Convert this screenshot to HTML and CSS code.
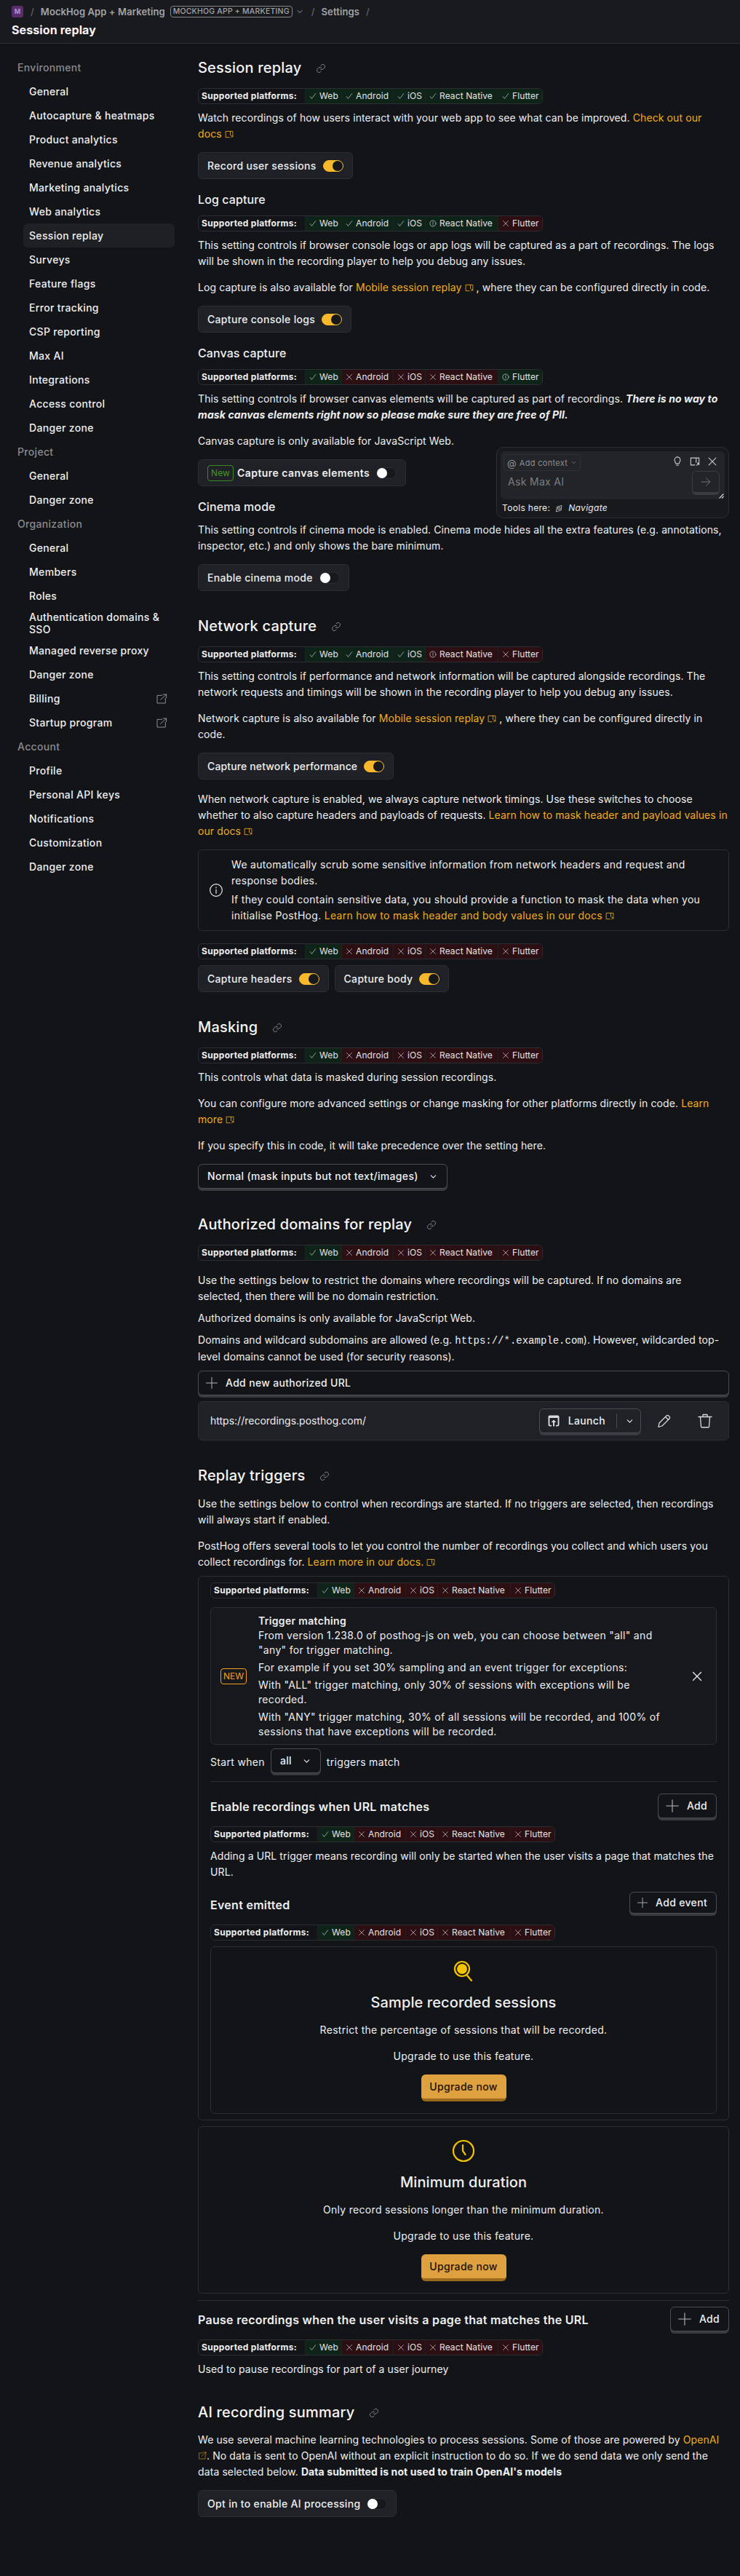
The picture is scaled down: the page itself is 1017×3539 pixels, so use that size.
FILE: index.html
```html
<!DOCTYPE html>
<html>
    <head>
        <meta charset="utf-8" />
        <title>Session replay</title>
        <link rel="stylesheet" href="styles.css">
    </head>

    <body>
        <svg class="sprite" xmlns="http://www.w3.org/2000/svg">
            <symbol id="i-link" viewBox="0 0 24 24"><path d="M10 13a5 5 0 0 0 7.5.5l3-3a5 5 0 0 0-7-7l-1.7 1.7M14 11a5 5 0 0 0-7.5-.5l-3 3a5 5 0 0 0 7 7l1.7-1.7"/></symbol>
            <symbol id="i-check" viewBox="0 0 16 16"><path d="M2 9l3.5 4.5L14 2.5"/></symbol>
            <symbol id="i-x" viewBox="0 0 16 16"><path d="M2.5 2.5l11 11M13.5 2.5l-11 11"/></symbol>
            <symbol id="i-warn" viewBox="0 0 16 16"><circle cx="8" cy="8" r="6.5"/><path d="M8 4.5v4.5M8 10.5v1"/></symbol>
            <symbol id="i-open" viewBox="0 0 16 14"><path d="M8 12.5H1.5v-11h13V8M10 1.5v7M11 13l3.5-3.5M12 9.5h2.5V12"/></symbol>
            <symbol id="i-external" viewBox="0 0 24 24"><path d="M13 5H3v16h17V11M10 14L22 3M15 3h7v7"/></symbol>
            <symbol id="i-chevron" viewBox="0 0 16 16"><path d="M4 6l4 4 4-4"/></symbol>
            <symbol id="i-plus" viewBox="0 0 24 24"><path d="M12 2v20M2 12h20"/></symbol>
            <symbol id="i-info" viewBox="0 0 24 24"><circle cx="12" cy="12" r="10"/><path d="M12 11v6M12 7v1.2"/></symbol>
        </svg>

        <header class="topbar">
            <div class="crumbs">
                <span class="logo">M</span>
                <span class="slash">/</span>
                <span class="crumb">MockHog App + Marketing</span>
                <span class="org-tag">MOCKHOG APP + MARKETING</span>
                <svg class="crumb-chevron ico"><use href="#i-chevron"/></svg>
                <span class="slash slash-wide">/</span>
                <span class="crumb">Settings</span>
                <span class="slash slash-wide">/</span>
            </div>
            <h1>Session replay</h1>
        </header>

        <div class="layout">
            <nav class="sidebar">
                <div class="nav-label">Environment</div>
                <a class="nav-item">General</a>
                <a class="nav-item">Autocapture &amp; heatmaps</a>
                <a class="nav-item">Product analytics</a>
                <a class="nav-item">Revenue analytics</a>
                <a class="nav-item">Marketing analytics</a>
                <a class="nav-item">Web analytics</a>
                <a class="nav-item active">Session replay</a>
                <a class="nav-item">Surveys</a>
                <a class="nav-item">Feature flags</a>
                <a class="nav-item">Error tracking</a>
                <a class="nav-item">CSP reporting</a>
                <a class="nav-item">Max AI</a>
                <a class="nav-item">Integrations</a>
                <a class="nav-item">Access control</a>
                <a class="nav-item">Danger zone</a>
                <div class="nav-label">Project</div>
                <a class="nav-item">General</a>
                <a class="nav-item">Danger zone</a>
                <div class="nav-label">Organization</div>
                <a class="nav-item">General</a>
                <a class="nav-item">Members</a>
                <a class="nav-item">Roles</a>
                <a class="nav-item nav-tall">Authentication domains &amp; SSO</a>
                <a class="nav-item">Managed reverse proxy</a>
                <a class="nav-item">Danger zone</a>
                <a class="nav-item">Billing <svg class="ico nav-ext"><use href="#i-external"/></svg></a>
                <a class="nav-item">Startup program <svg class="ico nav-ext"><use href="#i-external"/></svg></a>
                <div class="nav-label">Account</div>
                <a class="nav-item">Profile</a>
                <a class="nav-item">Personal API keys</a>
                <a class="nav-item">Notifications</a>
                <a class="nav-item">Customization</a>
                <a class="nav-item">Danger zone</a>
            </nav>

            <main class="content">
                <h2 class="first">Session replay <svg class="ico link-ico"><use href="#i-link"/></svg></h2>
                <div class="platforms mt-12">
                    <b>Supported platforms:</b>
                    <span class="yes"><svg class="ico"><use href="#i-check"/></svg>Web</span>
                    <span class="yes"><svg class="ico"><use href="#i-check"/></svg>Android</span>
                    <span class="yes"><svg class="ico"><use href="#i-check"/></svg>iOS</span>
                    <span class="yes"><svg class="ico"><use href="#i-check"/></svg>React Native</span>
                    <span class="yes"><svg class="ico"><use href="#i-check"/></svg>Flutter</span>
                </div>
                <p class="mt-8">Watch recordings of how users interact with your web app to see what can be improved. <a>Check out our<br>docs <svg class="ico open-ico"><use href="#i-open"/></svg></a></p>
                <div class="toggle-card mt-14">Record user sessions <span class="toggle on"></span></div>

                <h3 class="mt-16">Log capture</h3>
                <div class="platforms mt-10">
                    <b>Supported platforms:</b>
                    <span class="yes"><svg class="ico"><use href="#i-check"/></svg>Web</span>
                    <span class="yes"><svg class="ico"><use href="#i-check"/></svg>Android</span>
                    <span class="yes"><svg class="ico"><use href="#i-check"/></svg>iOS</span>
                    <span class="yes"><svg class="ico"><use href="#i-warn"/></svg>React Native</span>
                    <span class="no"><svg class="ico"><use href="#i-x"/></svg>Flutter</span>
                </div>
                <p class="mt-8">This setting controls if browser console logs or app logs will be captured as a part of recordings. The logs will be shown in the recording player to help you debug any issues.</p>
                <p class="mt-14">Log capture is also available for <a>Mobile session replay <svg class="ico open-ico"><use href="#i-open"/></svg></a> , where they can be configured directly in code.</p>
                <div class="toggle-card mt-14">Capture console logs <span class="toggle on"></span></div>

                <h3 class="mt-16">Canvas capture</h3>
                <div class="platforms mt-10">
                    <b>Supported platforms:</b>
                    <span class="yes"><svg class="ico"><use href="#i-check"/></svg>Web</span>
                    <span class="no"><svg class="ico"><use href="#i-x"/></svg>Android</span>
                    <span class="no"><svg class="ico"><use href="#i-x"/></svg>iOS</span>
                    <span class="no"><svg class="ico"><use href="#i-x"/></svg>React Native</span>
                    <span class="yes"><svg class="ico"><use href="#i-warn"/></svg>Flutter</span>
                </div>
                <p class="mt-8">This setting controls if browser canvas elements will be captured as part of recordings. <b><i>There is no way to mask canvas elements right now so please make sure they are free of PII.</i></b></p>
                <p class="mt-14">Canvas capture is only available for JavaScript Web.</p>
                <div class="toggle-card mt-14 semibold"><span class="new-tag">New</span> Capture canvas elements <span class="toggle"></span></div>

                <h3 class="mt-16">Cinema mode</h3>
                <p class="mt-9">This setting controls if cinema mode is enabled. Cinema mode hides all the extra features (e.g. annotations, inspector, etc.) and only shows the bare minimum.</p>
                <div class="toggle-card mt-14">Enable cinema mode <span class="toggle"></span></div>

                <h2>Network capture <svg class="ico link-ico"><use href="#i-link"/></svg></h2>
                <div class="platforms mt-12">
                    <b>Supported platforms:</b>
                    <span class="yes"><svg class="ico"><use href="#i-check"/></svg>Web</span>
                    <span class="yes"><svg class="ico"><use href="#i-check"/></svg>Android</span>
                    <span class="yes"><svg class="ico"><use href="#i-check"/></svg>iOS</span>
                    <span class="no"><svg class="ico"><use href="#i-warn"/></svg>React Native</span>
                    <span class="no"><svg class="ico"><use href="#i-x"/></svg>Flutter</span>
                </div>
                <p class="mt-8">This setting controls if performance and network information will be captured alongside recordings. The network requests and timings will be shown in the recording player to help you debug any issues.</p>
                <p class="mt-14">Network capture is also available for <a>Mobile session replay <svg class="ico open-ico"><use href="#i-open"/></svg></a> , where they can be configured directly in code.</p>
                <div class="toggle-card mt-14 tight">Capture network performance <span class="toggle on"></span></div>
                <p class="mt-16">When network capture is enabled, we always capture network timings. Use these switches to choose whether to also capture headers and payloads of requests. <a>Learn how to mask header and payload values in our docs <svg class="ico open-ico"><use href="#i-open"/></svg></a></p>
                <div class="info-box mt-14">
                    <svg class="ico info-ico"><use href="#i-info"/></svg>
                    <div>
                        <p>We automatically scrub some sensitive information from network headers and request and response bodies.</p>
                        <p class="mt-4">If they could contain sensitive data, you should provide a function to mask the data when you initialise PostHog. <a>Learn how to mask header and body values in our docs <svg class="ico open-ico"><use href="#i-open"/></svg></a></p>
                    </div>
                </div>
                <div class="platforms mt-17">
                    <b>Supported platforms:</b>
                    <span class="yes"><svg class="ico"><use href="#i-check"/></svg>Web</span>
                    <span class="no"><svg class="ico"><use href="#i-x"/></svg>Android</span>
                    <span class="no"><svg class="ico"><use href="#i-x"/></svg>iOS</span>
                    <span class="no"><svg class="ico"><use href="#i-x"/></svg>React Native</span>
                    <span class="no"><svg class="ico"><use href="#i-x"/></svg>Flutter</span>
                </div>
                <div class="card-row mt-8">
                    <div class="toggle-card">Capture headers <span class="toggle on"></span></div>
                    <div class="toggle-card">Capture body <span class="toggle on"></span></div>
                </div>

                <h2>Masking <svg class="ico link-ico"><use href="#i-link"/></svg></h2>
                <div class="platforms mt-12">
                    <b>Supported platforms:</b>
                    <span class="yes"><svg class="ico"><use href="#i-check"/></svg>Web</span>
                    <span class="no"><svg class="ico"><use href="#i-x"/></svg>Android</span>
                    <span class="no"><svg class="ico"><use href="#i-x"/></svg>iOS</span>
                    <span class="no"><svg class="ico"><use href="#i-x"/></svg>React Native</span>
                    <span class="no"><svg class="ico"><use href="#i-x"/></svg>Flutter</span>
                </div>
                <p class="mt-8">This controls what data is masked during session recordings.</p>
                <p class="mt-14">You can configure more advanced settings or change masking for other platforms directly in code. <a>Learn more <svg class="ico open-ico"><use href="#i-open"/></svg></a></p>
                <p class="mt-14">If you specify this in code, it will take precedence over the setting here.</p>
                <button class="btn select-btn mt-14">Normal (mask inputs but not text/images) <svg class="ico chevron"><use href="#i-chevron"/></svg></button>

                <h2 class="after-btn">Authorized domains for replay <svg class="ico link-ico"><use href="#i-link"/></svg></h2>
                <div class="platforms mt-12">
                    <b>Supported platforms:</b>
                    <span class="yes"><svg class="ico"><use href="#i-check"/></svg>Web</span>
                    <span class="no"><svg class="ico"><use href="#i-x"/></svg>Android</span>
                    <span class="no"><svg class="ico"><use href="#i-x"/></svg>iOS</span>
                    <span class="no"><svg class="ico"><use href="#i-x"/></svg>React Native</span>
                    <span class="no"><svg class="ico"><use href="#i-x"/></svg>Flutter</span>
                </div>
                <p class="mt-16">Use the settings below to restrict the domains where recordings will be captured. If no domains are<br>selected, then there will be no domain restriction.</p>
                <p class="mt-8">Authorized domains is only available for JavaScript Web.</p>
                <p class="mt-8">Domains and wildcard subdomains are allowed (e.g. <code>https://*.example.com</code>). However, wildcarded top-level domains cannot be used (for security reasons).</p>
                <button class="btn btn-wide mt-8"><svg class="ico plus-ico"><use href="#i-plus"/></svg>Add new authorized URL</button>
                <div class="domain-row mt-8">
                    <span class="domain">https://recordings.posthog.com/</span>
                    <button class="btn launch-btn">
                        <svg class="launch-ico" viewBox="0 0 18 18"><path d="M1.5 3.5a2 2 0 0 1 2-2h11a2 2 0 0 1 2 2v11a2 2 0 0 1-2 2h-2.5v-1.8h2.6V5H3.4v9.7H6v1.8H3.5a2 2 0 0 1-2-2z"/><path d="M9 7.5l3.4 3.6h-2.4v5.4H8v-5.4H5.6z"/></svg>
                        Launch
                        <span class="launch-sep"></span>
                        <svg class="ico chevron"><use href="#i-chevron"/></svg>
                    </button>
                    <svg class="row-ico edit-ico" viewBox="0 0 20 20"><path d="M2 18.5l1-5.5L13 3a2 2 0 0 1 2.8 0l1.2 1.2a2 2 0 0 1 0 2.8L7 17zM11.5 4.5l4 4"/></svg>
                    <svg class="row-ico trash-ico" viewBox="0 0 20 20"><path d="M1 4.5h18M7 4.5V1.5h6v3M3.5 4.5l1 13.5a1.2 1.2 0 0 0 1.2 1h8.6a1.2 1.2 0 0 0 1.2-1l1-13.5"/></svg>
                </div>

                <h2>Replay triggers <svg class="ico link-ico"><use href="#i-link"/></svg></h2>
                <p class="mt-12">Use the settings below to control when recordings are started. If no triggers are selected, then recordings will always start if enabled.</p>
                <p class="mt-14">PostHog offers several tools to let you control the number of recordings you collect and which users you collect recordings for. <a>Learn more in our docs. <svg class="ico open-ico"><use href="#i-open"/></svg></a></p>

                <section class="box trigger-box mt-8">
                    <div class="platforms">
                        <b>Supported platforms:</b>
                        <span class="yes"><svg class="ico"><use href="#i-check"/></svg>Web</span>
                        <span class="no"><svg class="ico"><use href="#i-x"/></svg>Android</span>
                        <span class="no"><svg class="ico"><use href="#i-x"/></svg>iOS</span>
                        <span class="no"><svg class="ico"><use href="#i-x"/></svg>React Native</span>
                        <span class="no"><svg class="ico"><use href="#i-x"/></svg>Flutter</span>
                    </div>
                    <div class="banner mt-12">
                        <span class="banner-tag">NEW</span>
                        <div class="banner-text">
                            <div class="semibold">Trigger matching</div>
                            <div>From version 1.238.0 of posthog-js on web, you can choose between "all" and "any" for trigger matching.</div>
                            <div class="mt-4">For example if you set 30% sampling and an event trigger for exceptions:</div>
                            <div class="mt-4">With "ALL" trigger matching, only 30% of sessions with exceptions will be recorded.</div>
                            <div class="mt-4">With "ANY" trigger matching, 30% of all sessions will be recorded, and 100% of sessions that have exceptions will be recorded.</div>
                        </div>
                        <svg class="ico banner-close"><use href="#i-x"/></svg>
                    </div>
                    <div class="start-row">
                        <span>Start when</span>
                        <button class="btn all-btn">all <svg class="ico chevron"><use href="#i-chevron"/></svg></button>
                        <span>triggers match</span>
                    </div>
                    <hr class="rule">
                    <div class="title-row mt-16">
                        <span class="row-title">Enable recordings when URL matches</span>
                        <button class="btn add-btn"><svg class="ico plus-ico"><use href="#i-plus"/></svg>Add</button>
                    </div>
                    <div class="platforms mt-8">
                        <b>Supported platforms:</b>
                        <span class="yes"><svg class="ico"><use href="#i-check"/></svg>Web</span>
                        <span class="no"><svg class="ico"><use href="#i-x"/></svg>Android</span>
                        <span class="no"><svg class="ico"><use href="#i-x"/></svg>iOS</span>
                        <span class="no"><svg class="ico"><use href="#i-x"/></svg>React Native</span>
                        <span class="no"><svg class="ico"><use href="#i-x"/></svg>Flutter</span>
                    </div>
                    <p class="mt-8">Adding a URL trigger means recording will only be started when the user visits a page that matches the URL.</p>
                    <div class="title-row mt-16">
                        <span class="row-title">Event emitted</span>
                        <button class="btn add-btn btn-small"><svg class="ico plus-ico"><use href="#i-plus"/></svg>Add event</button>
                    </div>
                    <div class="platforms mt-8">
                        <b>Supported platforms:</b>
                        <span class="yes"><svg class="ico"><use href="#i-check"/></svg>Web</span>
                        <span class="no"><svg class="ico"><use href="#i-x"/></svg>Android</span>
                        <span class="no"><svg class="ico"><use href="#i-x"/></svg>iOS</span>
                        <span class="no"><svg class="ico"><use href="#i-x"/></svg>React Native</span>
                        <span class="no"><svg class="ico"><use href="#i-x"/></svg>Flutter</span>
                    </div>
                    <div class="box upsell mt-8">
                        <svg class="upsell-ico" viewBox="0 0 32 32"><circle class="fill" cx="14" cy="13" r="7"/><circle cx="14" cy="13" r="10"/><path d="M21 22l6 7"/></svg>
                        <div class="upsell-title">Sample recorded sessions</div>
                        <p class="mt-11">Restrict the percentage of sessions that will be recorded.</p>
                        <p class="mt-14">Upgrade to use this feature.</p>
                        <button class="btn-primary mt-14">Upgrade now</button>
                    </div>
                </section>

                <div class="box upsell mt-8">
                    <svg class="upsell-ico" viewBox="0 0 32 32"><circle cx="16" cy="16" r="14"/><path d="M15 8l0 8 3.5 5"/></svg>
                    <div class="upsell-title">Minimum duration</div>
                    <p class="mt-11">Only record sessions longer than the minimum duration.</p>
                    <p class="mt-14">Upgrade to use this feature.</p>
                    <button class="btn-primary mt-14">Upgrade now</button>
                </div>

                <hr class="rule rule-tall">
                <div class="title-row mt-8">
                    <span class="row-title">Pause recordings when the user visits a page that matches the URL</span>
                    <button class="btn add-btn"><svg class="ico plus-ico"><use href="#i-plus"/></svg>Add</button>
                </div>
                <div class="platforms mt-8">
                    <b>Supported platforms:</b>
                    <span class="yes"><svg class="ico"><use href="#i-check"/></svg>Web</span>
                    <span class="no"><svg class="ico"><use href="#i-x"/></svg>Android</span>
                    <span class="no"><svg class="ico"><use href="#i-x"/></svg>iOS</span>
                    <span class="no"><svg class="ico"><use href="#i-x"/></svg>React Native</span>
                    <span class="no"><svg class="ico"><use href="#i-x"/></svg>Flutter</span>
                </div>
                <p class="mt-8">Used to pause recordings for part of a user journey</p>

                <h2>AI recording summary <svg class="ico link-ico"><use href="#i-link"/></svg></h2>
                <p class="mt-11">We use several machine learning technologies to process sessions. Some of those are powered by <a>OpenAI <svg class="ico open-ico ext-small"><use href="#i-external"/></svg></a>. No data is sent to OpenAI without an explicit instruction to do so. If we do send data we only send the data selected below. <b>Data submitted is not used to train OpenAI's models</b></p>
                <div class="toggle-card mt-14">Opt in to enable AI processing <span class="toggle"></span></div>
            </main>
        </div>

        <aside class="max-panel">
            <div class="max-input">
                <div class="max-top">
                    <span class="context-btn"><span class="at">@</span> Add context <svg class="ico"><use href="#i-chevron"/></svg></span>
                    <div class="max-icons">
                        <svg class="ico" viewBox="0 0 16 16"><path d="M5.5 11.5c0-2-2-3-2-6a4.5 4.5 0 0 1 9 0c0 3-2 4-2 6zM6.5 14h3"/></svg>
                        <svg class="ico"><use href="#i-open"/></svg>
                        <svg class="ico"><use href="#i-x"/></svg>
                    </div>
                </div>
                <div class="max-ask">Ask Max AI</div>
                <span class="max-send"><svg class="ico" viewBox="0 0 24 24"><path d="M2 12h20M13 3l9 9-9 9"/></svg></span>
                <svg class="max-resize ico" viewBox="0 0 8 8"><path d="M1 7l6-6M5 7l2-2"/></svg>
            </div>
            <div class="max-tools">Tools here: <svg class="ico" viewBox="0 0 16 16"><path d="M2 14l1.5-9L13 2l-1 9zM6 6h4v4H6z"/></svg> <i>Navigate</i></div>
        </aside>
    </body>
</html>
```

FILE: styles.css
```css
html,
body {
    margin: 0;
    padding: 0;
    background: #131417;
    color: #eeeff1;
    font-family: 'Inter', sans-serif;
    font-size: 14px;
    line-height: 22px;
    letter-spacing: 0.32px;
}

body {
    position: relative;
    min-height: 3539px;
    overflow-x: hidden;
}

.sprite {
    display: none;
}

.ico {
    fill: none;
    stroke: currentColor;
    stroke-width: 1.3;
    stroke-linecap: round;
    stroke-linejoin: round;
    width: 14px;
    height: 14px;
    flex: none;
}

/* top bar */
.topbar {
    height: 60px;
    box-sizing: border-box;
    padding: 8px 16px 0;
    background: #191a1e;
    border-bottom: 1px solid #2e3036;
}

.crumbs {
    display: flex;
    align-items: center;
    height: 16px;
    font-size: 13px;
    font-weight: 600;
    letter-spacing: 0.1px;
    color: #a3a4a8;
}

.logo {
    width: 16px;
    height: 16px;
    border-radius: 3px;
    background: #5a2d6e;
    color: #b78fc8;
    font-size: 9px;
    font-weight: 700;
    line-height: 16px;
    text-align: center;
}

.slash {
    margin: 0 9px 0 10px;
    font-weight: 400;
    color: #6c6d72;
}

.slash-wide {
    margin: 0 9px;
}

.org-tag {
    margin-left: 7px;
    padding: 0 3px;
    height: 16px;
    border: 1px solid #85868a;
    border-radius: 4px;
    box-sizing: border-box;
    font-size: 10.5px;
    line-height: 14px;
    font-weight: 500;
    letter-spacing: 0.2px;
}

.crumb-chevron {
    width: 12px;
    height: 12px;
    margin-left: 4px;
    margin-right: 1px;
}

.topbar h1 {
    margin: 8px 0 0;
    font-size: 16px;
    line-height: 18px;
    font-weight: 700;
    letter-spacing: 0.1px;
    color: #f5f5f6;
}

/* layout */
.layout {
    display: flex;
}

.sidebar {
    flex: none;
    width: 208px;
    padding: 16px 32px 0 32px;
}

.nav-label {
    margin-left: -8px;
    height: 33px;
    font-weight: 500;
    line-height: 33px;
    color: #8a8b8f;
}

.nav-item {
    display: flex;
    align-items: center;
    justify-content: space-between;
    padding: 8px;
    line-height: 17px;
    font-weight: 500;
    border-radius: 6px;
    color: #eeeff1;
}

.nav-tall {
    padding: 4px 8px;
}

.nav-item.active {
    background: #1f2024;
}

.nav-ext {
    width: 16px;
    height: 16px;
    color: #a0a1a5;
    margin-right: 2px;
}

.content {
    box-sizing: border-box;
    width: 730px;
    padding: 17px 0 81px;
}

/* text */
h2 {
    margin: 32px 0 0;
    font-size: 20px;
    line-height: 32px;
    font-weight: 500;
    letter-spacing: 0.2px;
    color: #f5f5f6;
}

h2.first {
    margin-top: 0;
}

h3 {
    margin: 0;
    font-size: 16px;
    line-height: 24px;
    font-weight: 500;
    letter-spacing: 0.1px;
}

p {
    margin: 0;
    letter-spacing: 0.1px;
}

.info-box p,
.upsell p {
    letter-spacing: 0.3px;
}

a {
    color: #f0ac20;
}

code {
    font-family: 'Liberation Mono', monospace;
    font-size: 14px;
    letter-spacing: 0;
}

.semibold {
    font-weight: 600;
}

.link-ico {
    width: 14px;
    height: 14px;
    margin-left: 14px;
    color: #a0a1a5;
    vertical-align: -1px;
}

.open-ico {
    width: 12px;
    height: 11px;
    vertical-align: -1px;
    stroke-width: 1.1;
}

.ext-small {
    height: 13px;
}

.mt-4 { margin-top: 4px; }
.mt-8 { margin-top: 8px; }
.mt-9 { margin-top: 9px; }
.mt-10 { margin-top: 10px; }
.mt-11 { margin-top: 11px; }
.mt-12 { margin-top: 12px; }
.mt-14 { margin-top: 14px; }
.mt-16 { margin-top: 16px; }
.mt-17 { margin-top: 17px; }

/* supported platforms */
.platforms {
    display: flex;
    height: 22px;
    width: 474px;
    box-sizing: border-box;
    border: 1px solid #2b2d33;
    border-radius: 6px;
    overflow: hidden;
    font-size: 12px;
    line-height: 20px;
    letter-spacing: 0.1px;
}

.platforms b {
    flex: none;
    width: 146px;
    padding-left: 4px;
    box-sizing: border-box;
    font-weight: 700;
    letter-spacing: 0.3px;
}

.platforms span {
    flex: none;
    display: flex;
    align-items: center;
    gap: 4px;
    box-sizing: border-box;
    width: 50px;
    padding: 0 0 0 5px;
    border-left: 1px solid #1d2024;
    color: #e2e3e5;
    white-space: nowrap;
}

.platforms span:nth-of-type(2) {
    width: 71px;
}

.platforms span:nth-of-type(3) {
    width: 44px;
}

.platforms span:nth-of-type(4) {
    width: 100px;
}

.platforms span:nth-of-type(5) {
    width: 61px;
}

.platforms .ico {
    width: 10px;
    height: 10px;
    stroke-width: 1;
}

.platforms .yes {
    background: #0f2419;
}

.platforms .no {
    background: #2c0f12;
}

/* toggle cards */
.toggle-card {
    display: flex;
    align-items: center;
    gap: 8px;
    width: fit-content;
    height: 37px;
    box-sizing: border-box;
    padding: 0 12px;
    background: #1f2126;
    border: 1px solid #2b2d33;
    border-radius: 6px;
    font-weight: 500;
}

.toggle-card.tight {
    letter-spacing: 0.14px;
}

.toggle-card.semibold {
    font-weight: 600;
    letter-spacing: 0.45px;
    gap: 5px;
}

.toggle {
    position: relative;
    display: block;
    width: 28px;
    height: 16px;
    margin-left: 1px;
    box-sizing: border-box;
    border: 1px solid #2b2d33;
    border-radius: 8px;
    background: #17181b;
}

.toggle-card.semibold .toggle {
    margin-left: 4px;
}

.toggle::after {
    content: '';
    position: absolute;
    top: 0;
    left: 0;
    width: 14px;
    height: 14px;
    border-radius: 50%;
    background: #fff;
}

.toggle.on {
    background: #f7b82b;
    border-color: #f7b82b;
}

.toggle.on::after {
    left: 12px;
    background: #17181b;
}

.new-tag {
    padding: 0 4px;
    height: 22px;
    box-sizing: border-box;
    border: 1px solid #3a8a1e;
    border-radius: 4px;
    color: #3f9a1f;
    font-size: 12px;
    line-height: 20px;
    font-weight: 400;
    letter-spacing: 0.1px;
}

.card-row {
    display: flex;
    gap: 8px;
}

/* boxes */
.info-box {
    display: flex;
    align-items: center;
    gap: 11px;
    padding: 9px 20px 9px 14px;
    border: 1px solid #2b2d33;
    border-radius: 6px;
}

.info-ico {
    width: 20px;
    height: 20px;
    stroke-width: 1.4;
}

.box {
    border: 1px solid #2b2d33;
    border-radius: 6px;
}

.trigger-box {
    padding: 8px 16px;
}

.banner {
    display: flex;
    align-items: center;
    box-sizing: border-box;
    height: 189px;
    padding: 0 18px 0 13px;
    background: #17181c;
    border: 1px solid #2b2d33;
    border-radius: 6px;
    line-height: 20px;
}

.banner-tag {
    flex: none;
    box-sizing: border-box;
    width: 36px;
    height: 22px;
    border: 1px solid #f0a01e;
    border-radius: 4px;
    color: #f0a01e;
    font-size: 12px;
    line-height: 20px;
    text-align: center;
    letter-spacing: 0;
}

.banner-text {
    width: 552px;
    margin-left: 16px;
    margin-right: auto;
}

.banner-close {
    width: 16px;
    height: 16px;
}

.start-row {
    display: flex;
    align-items: center;
    gap: 8px;
    margin-top: 5px;
}

.rule {
    margin: 8px 0 0;
    border: 0;
    border-top: 1px solid #2b2d33;
}

.rule-tall {
    margin-top: 9px;
}

.title-row {
    display: flex;
    align-items: flex-start;
    justify-content: space-between;
}

.row-title {
    font-size: 16px;
    font-weight: 600;
    line-height: 37px;
    letter-spacing: 0.28px;
}

.upsell {
    display: flex;
    flex-direction: column;
    align-items: center;
    box-sizing: border-box;
    height: 230px;
    padding-top: 17px;
}

.upsell-ico {
    width: 32px;
    height: 32px;
    fill: none;
    stroke: #f3c300;
    stroke-width: 2.2;
    stroke-linecap: round;
}

.upsell-ico .fill {
    fill: #f3c300;
    stroke: none;
}

.upsell-title {
    margin-top: 11px;
    font-size: 20px;
    line-height: 32px;
    font-weight: 500;
    letter-spacing: 0.1px;
}

/* buttons */
.btn {
    display: flex;
    align-items: center;
    box-sizing: border-box;
    height: 34px;
    margin-bottom: 3px;
    padding: 0 12px;
    background: #131417;
    color: #eeeff1;
    border: 1px solid #4a4c53;
    border-radius: 6px;
    box-shadow: 0 3px 0 0 #3a3b41;
    font-family: inherit;
    font-size: 14px;
    font-weight: 500;
    line-height: 22px;
    letter-spacing: 0.32px;
}

.chevron {
    width: 13px;
    height: 13px;
}

.select-btn {
    width: fit-content;
    gap: 14px;
}

.after-btn {
    margin-top: 33px;
}

.btn-wide {
    width: 100%;
    padding: 0 9px;
}

.plus-ico {
    width: 20px;
    height: 20px;
    margin-right: 10px;
    color: #b8b9bd;
}

.btn-wide .plus-ico {
    width: 18px;
    height: 18px;
}

.domain-row {
    display: flex;
    align-items: center;
    height: 54px;
    box-sizing: border-box;
    padding: 0 16px;
    background: #1f2126;
    border: 1px solid #2b2d33;
    border-radius: 6px;
}

.domain {
    margin-right: auto;
    letter-spacing: 0;
}

.launch-btn {
    padding: 0 8px 0 10px;
    gap: 11px;
    background: transparent;
    margin-top: 3px;
}

.launch-ico {
    width: 18px;
    height: 18px;
    fill: #d8d9dc;
}

.launch-sep {
    width: 1px;
    height: 20px;
    margin-left: 4px;
    background: #4a4c53;
}

.row-ico {
    width: 20px;
    height: 20px;
    fill: none;
    stroke: #d8d9dc;
    stroke-width: 1.3;
    stroke-linejoin: round;
    stroke-linecap: round;
}

.edit-ico {
    margin-left: 22px;
}

.trash-ico {
    margin-left: 36px;
    margin-right: 6px;
}

.all-btn {
    gap: 14px;
}

.add-btn {
    padding: 0 12px 0 9px;
}

.btn-small {
    height: 30px;
}

.btn-small .plus-ico {
    width: 16px;
    height: 16px;
    margin-right: 10px;
}

.btn-primary {
    width: 117px;
    height: 37px;
    box-sizing: border-box;
    border: 0;
    border-bottom: 4px solid #9a6a1c;
    border-radius: 6px;
    background: #dfa040;
    color: #1a1305;
    font-family: inherit;
    font-size: 14px;
    font-weight: 500;
    letter-spacing: 0.32px;
}

/* floating max panel */
.max-panel {
    position: absolute;
    left: 682px;
    top: 614px;
    box-sizing: border-box;
    width: 320px;
    height: 98px;
    padding: 5px;
    background: #18191d;
    border: 1px solid #2b2d33;
    border-radius: 10px;
}

.max-input {
    position: relative;
    height: 66px;
    background: #222428;
    border-radius: 6px;
}

.max-top {
    display: flex;
    align-items: center;
    justify-content: space-between;
    padding: 4px 8px 0 4px;
}

.context-btn {
    display: flex;
    align-items: center;
    gap: 4px;
    height: 21px;
    padding: 0 4px;
    border: 1px solid #2e3036;
    border-radius: 4px;
    font-size: 11px;
    letter-spacing: 0.3px;
    color: #8d8e92;
}

.context-btn .at {
    font-size: 13px;
}

.context-btn .ico {
    width: 9px;
    height: 9px;
}

.max-icons {
    display: flex;
    gap: 10px;
    color: #c6c7ca;
    padding-right: 2px;
    margin-top: -4px;
}

.max-ask {
    padding: 5px 10px;
    color: #7d7e82;
    line-height: 20px;
}

.max-send {
    position: absolute;
    right: 7px;
    top: 27px;
    display: flex;
    align-items: center;
    justify-content: center;
    box-sizing: border-box;
    width: 38px;
    height: 33px;
    border: 1px solid #3a3c43;
    border-bottom-width: 4px;
    border-radius: 6px;
    color: #8d8e92;
}

.max-resize {
    position: absolute;
    right: 1px;
    bottom: 1px;
    width: 7px;
    height: 7px;
}

.max-tools {
    display: flex;
    align-items: center;
    gap: 5px;
    margin-top: 4px;
    padding-left: 2px;
    font-size: 12px;
    line-height: 16px;
    color: #eeeff1;
}

.max-tools .ico {
    width: 11px;
    height: 11px;
    margin: 0 2px;
    stroke-width: 1;
}
```
